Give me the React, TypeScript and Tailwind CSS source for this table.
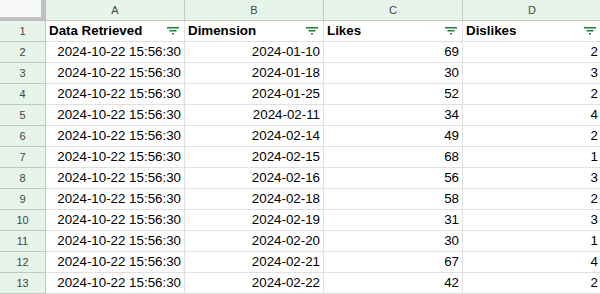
import React from "react";

const rows: [string, string, number, number][] = [
  ["2024-10-22 15:56:30", "2024-01-10", 69, 2],
  ["2024-10-22 15:56:30", "2024-01-18", 30, 3],
  ["2024-10-22 15:56:30", "2024-01-25", 52, 2],
  ["2024-10-22 15:56:30", "2024-02-11", 34, 4],
  ["2024-10-22 15:56:30", "2024-02-14", 49, 2],
  ["2024-10-22 15:56:30", "2024-02-15", 68, 1],
  ["2024-10-22 15:56:30", "2024-02-16", 56, 3],
  ["2024-10-22 15:56:30", "2024-02-18", 58, 2],
  ["2024-10-22 15:56:30", "2024-02-19", 31, 3],
  ["2024-10-22 15:56:30", "2024-02-20", 30, 1],
  ["2024-10-22 15:56:30", "2024-02-21", 67, 4],
  ["2024-10-22 15:56:30", "2024-02-22", 42, 2],
];

const FilterIcon = () => (
  <svg width="13" height="8" viewBox="0 0 13 8" className="shrink-0">
    <rect x="0" y="0" width="12" height="1.5" fill="#188038" />
    <rect x="2.5" y="3" width="7" height="1.5" fill="#188038" />
    <rect x="5" y="6" width="2" height="1.5" fill="#188038" />
  </svg>
);

const headers = ["Data Retrieved", "Dimension", "Likes", "Dislikes"];
const letters = ["A", "B", "C", "D"];

export default function App() {
  return (
    <div
      className="w-[600px] h-[294px] overflow-hidden bg-white text-[13.33px] text-[#000]"
      style={{ fontFamily: '"Liberation Sans", Arial, sans-serif' }}
    >
      {/* column header row */}
      <div className="flex h-[21px]">
        <div className="w-[46px] h-[21px] shrink-0 bg-[#f8f9fa] border-b-4 border-[#c0c0c0] box-border border-r-[5px]" />
        {letters.map((l) => (
          <div
            key={l}
            className="w-[139px] h-[21px] shrink-0 bg-[#e6f4ea] border-r border-b border-[#c4c7c5] flex items-center justify-center text-[11px] text-[#444746]"
          >
            {l}
          </div>
        ))}
      </div>
      {/* header data row */}
      <div className="flex h-[21px]">
        <div className="w-[46px] h-[21px] shrink-0 bg-[#e6f4ea] border-r border-b border-[#c4c7c5] flex items-center justify-center text-[11px] text-[#444746]">
          1
        </div>
        {headers.map((h) => (
          <div
            key={h}
            className="w-[139px] h-[21px] shrink-0 border-r border-b border-[#e1e1e1] flex items-center justify-between pl-[3px] pr-[4px] font-bold"
          >
            <span>{h}</span>
            <FilterIcon />
          </div>
        ))}
      </div>
      {rows.map((r, i) => (
        <div key={i} className="flex h-[21px]">
          <div className="w-[46px] h-[21px] shrink-0 bg-[#e6f4ea] border-r border-b border-[#c4c7c5] flex items-center justify-center text-[11px] text-[#444746]">
            {i + 2}
          </div>
          {r.map((c, j) => (
            <div
              key={j}
              className="w-[139px] h-[21px] shrink-0 border-r border-b border-[#e1e1e1] flex items-center justify-end pr-[3px]"
            >
              {c}
            </div>
          ))}
        </div>
      ))}
    </div>
  );
}
